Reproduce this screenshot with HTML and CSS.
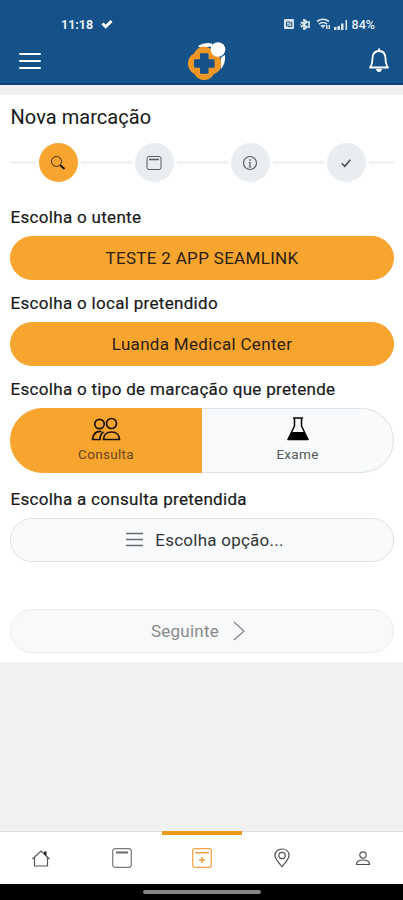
FILE: index.html
```html
<!DOCTYPE html>
<html lang="pt">
<head>
<meta charset="UTF-8">
<meta name="viewport" content="width=device-width, initial-scale=1.0">
<title>Nova marcação</title>
<link rel="stylesheet" href="styles.css">
</head>
<body>
<header class="header">
  <div class="status-bar">
    <span class="clock">11:18</span>
    <svg class="status-check" width="12" height="10" viewBox="0 0 12 10"><path d="M1.500 4.500l3.200 3.200L10.500 2" fill="none" stroke="#fff" stroke-width="3"/></svg>
    <div class="status-right">
      <svg width="10" height="10" viewBox="0 0 10 10"><rect width="10" height="10" rx="1" fill="#dce6f0"/><path d="M2.500 7.500V3h3.500v2.500M4 5v2.500h3.800V2.500" fill="none" stroke="#145289"/></svg>
      <svg width="12" height="11" viewBox="0 0 12 11"><path d="M2 3l6 5-3 2.500V.5l3 2.500-6 5M10 2v7M.8 5.500h1" fill="none" stroke="#dce6f0" stroke-width="1.700"/></svg>
      <svg class="wifi" width="15" height="12" viewBox="0 0 15 12"><path d="M1 3.500q6-4.500 12 0M3 6q4-3 8 0M5 8.200q2-1.400 4 0" fill="none" stroke="#dce6f0" stroke-width="1.700"/><path d="M5.500 8.500h3L7 10.500zM10 7h1.500v4H10zM12.500 7H14v4h-1.500z" fill="#dce6f0"/></svg>
      <svg class="signal" width="15" height="11" viewBox="0 0 15 11"><path d="M1 8h2.500v3H1zM4.500 7H7v4H4.500zM8 4.500h2.500V11H8zM12.500 1h1.600v10h-1.600z" fill="#dce6f0"/></svg>
      <span class="battery">84%</span>
    </div>
  </div>
  <div class="toolbar">
    <svg class="menu" width="22" height="18" viewBox="0 0 22 18"><path d="M1 2h20M1 9h20M1 16h20" stroke="#fff" stroke-width="2" stroke-linecap="round"/></svg>
    <svg class="logo" width="40" height="40" viewBox="0 0 40 40">
      <path d="M11 5Q17 1 25 2.500v3l-12 1zM38 14q.8 8-4 14l-1.500-4 2-8z" fill="#fff"/>
      <path d="M11 7.500C15 5 20 5 24 8c1 1.500 2 2.500 3.500 3.500 2 1 4 2 5.500 5 1.500 3.500 1.500 9 0 12-1.500 2-4 3.500-6 4.500-2 3-5 6-9.500 6s-8-2-10-6C3.500 31 1 27 1 22.500S3.500 14 7 12.500c1-2 2-3.500 4-5z" fill="#ee9725"/>
      <path d="M13.800 13h7v6h6v7h-6v6h-7v-6h-6v-7h6z" fill="#145289" stroke="#145289" stroke-width="1.500" stroke-linejoin="round"/>
      <circle cx="31" cy="8.500" r="7.300" fill="#fff"/>
    </svg>
    <svg class="bell" width="22" height="26" viewBox="0 0 22 26"><path d="M2 20.500h18c-2-2.500-2.300-4-2.500-9C17.300 6.500 15 4 11 4S4.700 6.500 4.500 11.500c-.2 5-.5 6.500-2.500 9z" fill="none" stroke="#fff" stroke-width="1.800" stroke-linejoin="round"/><path d="M11 1.500V4" stroke="#fff" stroke-width="2"/><path d="M8 22h6c-.4 2-1.500 3-3 3s-2.600-1-3-3z" fill="#fff"/></svg>
  </div>
</header>

<main class="card">
  <h1 class="title">Nova marcação</h1>

  <!-- Steps -->
  <div class="steps">
    <div class="step active"><span class="dot">
      <svg width="16" height="16" viewBox="0 0 16 16"><circle cx="6.500" cy="6.500" r="5" fill="none" stroke="#3a2c15" stroke-width="1"/><path d="M10 10l4.500 4" stroke="#201507" stroke-width="2"/></svg>
    </span></div>
    <div class="step"><span class="dot">
      <svg width="16" height="16" viewBox="0 0 16 16"><rect x="1" y="1.500" width="14" height="13" rx="2" fill="none" stroke="#555c62"/><path d="M3 4.500h10" stroke="#555c62" stroke-width="1.500"/></svg>
    </span></div>
    <div class="step"><span class="dot">
      <svg width="16" height="16" viewBox="0 0 16 16"><circle cx="8" cy="8" r="6.500" fill="none" stroke="#555c62" stroke-width="1.200"/><path d="M8 4v2M6.800 7.500H8V12M6.800 12h2.400" fill="none" stroke="#555c62" stroke-width="1.200"/></svg>
    </span></div>
    <div class="step"><span class="dot">
      <svg width="16" height="16" viewBox="0 0 16 16"><path d="M3.800 8.300l3 3 5.500-6.500" fill="none" stroke="#454b50" stroke-width="1.500"/></svg>
    </span></div>
  </div>

  <p class="label">Escolha o utente</p>
  <button class="btn orange">TESTE 2 APP SEAMLINK</button>

  <p class="label">Escolha o local pretendido</p>
  <button class="btn orange">Luanda Medical Center</button>

  <p class="label">Escolha o tipo de marcação que pretende</p>
  <div class="toggle">
    <button class="option selected">
      <svg width="30" height="24" viewBox="0 0 30 24"><g fill="none" stroke="#1c1408" stroke-width="1.700"><circle cx="8.500" cy="7" r="4.700"/><circle cx="20.500" cy="6.500" r="5"/><path d="M12.500 22.500c0-4.500 3-7.500 8-7.500s8 3 8 7.500zM10.500 14.500C5 14 2 17 1.500 22.500H9c0-3.500 1-6 3.500-7.500"/></g></svg>
      <span>Consulta</span>
    </button>
    <button class="option">
      <svg width="24" height="24" viewBox="0 0 24 24"><path d="M8.500 1v8L2 22.500h20L15.500 9V1M7 1h10" fill="none" stroke="#000" stroke-width="1.500" stroke-linejoin="round"/><path d="M6 15h12l4.500 8h-21z"/></svg>
      <span>Exame</span>
    </button>
  </div>

  <p class="label">Escolha a consulta pretendida</p>
  <button class="btn light">
    <svg width="17" height="15" viewBox="0 0 17 15"><path d="M0 1.500h17M0 7.500h17M0 13.500h17" stroke="#686b6e" stroke-width="1.300"/></svg>
    <span>Escolha opção...</span>
  </button>

  <button class="btn light disabled" disabled>
    <span>Seguinte</span>
    <svg width="12" height="20" viewBox="0 0 12 20"><path d="M1 1l10 9-10 9" fill="none" stroke="#85878a" stroke-width="1.300"/></svg>
  </button>
</main>

<nav class="tabs">
  <a class="tab"><svg width="20" height="20" viewBox="0 0 20 20"><path d="M1.500 11L10 3l8.500 8M3.500 9.500V18h13V9.500" fill="none" stroke="#55585a" stroke-width="1.200"/><path d="M13 3.500h2.500V8L13 6z" fill="#222"/></svg></a>
  <a class="tab"><svg width="20" height="20" viewBox="0 0 20 20"><rect x=".7" y=".7" width="18.600" height="18.600" rx="2.500" fill="none" stroke="#77797b" stroke-width="1.200"/><path d="M4 4.500h12" stroke="#66686a" stroke-width="2"/></svg></a>
  <a class="tab current"><svg width="20" height="20" viewBox="0 0 20 20"><rect x=".7" y=".7" width="18.600" height="18.600" rx="2" fill="none" stroke="#f4a144" stroke-width="1.200"/><path d="M3 4.700h14M10 9v6M7 12h6" stroke="#f4a144" stroke-width="1.600"/></svg></a>
  <a class="tab"><svg width="18" height="20" viewBox="0 0 18 20"><path d="M9 18.500C5 14 2 11 2 7.500 2 3.500 5 1 9 1s7 2.500 7 6.500c0 3.500-3 6.500-7 11z" fill="none" stroke="#4d5052" stroke-width="1.200"/><circle cx="9" cy="7.500" r="3.200" fill="none" stroke="#4d5052" stroke-width="1.200"/></svg></a>
  <a class="tab"><svg width="16" height="18" viewBox="0 0 16 18"><circle cx="8" cy="6" r="3.200" fill="none" stroke="#4d5052" stroke-width="1.200"/><path d="M1.500 15.500c0-3 2-4.500 6.500-4.500s6.500 1.500 6.500 4.500z" fill="none" stroke="#4d5052" stroke-width="1.200"/></svg></a>
</nav>
<div class="gesture-bar"><span class="handle"></span></div>
</body>
</html>
```

FILE: styles.css
```css
* {
    box-sizing: border-box;
}

body {
    margin: 0;
    height: 900px;
    display: flex;
    flex-direction: column;
    background-color: #f1f1f1;
    color: #191919;
    font-family: Roboto, "Liberation Sans", sans-serif;
}

svg {
    display: block;
    flex: none;
}

.header {
    height: 85px;
    background-color: #145289;
    border-bottom: 2px solid #0b3b7d;
}

/* Phone status bar */
.status-bar {
    display: flex;
    align-items: center;
    height: 40px;
    padding: 8px 28px 0 61px;
    color: #e9f0f7;
    font-size: 12px;
    font-weight: 700;
}

.clock {
    width: 33px;
    font-size: 12.5px;
}

.status-check {
    margin-left: 7px;
}

.status-right {
    display: flex;
    align-items: center;
    margin-left: auto;
}

.status-right svg {
    margin-right: 5px;
}

.status-right .wifi {
    margin-right: 2px;
}

.status-right .signal {
    margin-right: 4px;
}

.battery {
    font-weight: 500;
    font-size: 12.5px;
}

.toolbar {
    display: flex;
    align-items: center;
    justify-content: space-between;
    height: 42px;
    padding: 0 13px 0 19px;
}

.logo {
    margin-left: 4px;
}

.bell {
    margin-bottom: 2px;
}

/* Form card */
.card {
    display: flex;
    flex-direction: column;
    height: 567px;
    margin-top: 10px;
    padding: 8px 9px 0 10px;
    background-color: #fff;
}

.title {
    margin: 0;
    padding-left: 0.5px;
    font-size: 20px;
    font-weight: 400;
    line-height: 28px;
    letter-spacing: 0.05px;
}

.steps {
    display: flex;
    margin: 12px 0 24px;
}

.step {
    display: flex;
    flex: 1;
    align-items: center;
    gap: 3px;
}

.step::before,
.step::after {
    content: "";
    flex: 1;
    height: 3px;
    background-color: #f1f2f3;
}

.dot {
    display: flex;
    align-items: center;
    justify-content: center;
    width: 39px;
    height: 39px;
    border-radius: 50%;
    background-color: #e9edf0;
}

.active .dot {
    background-color: #f8a530;
}

.label {
    margin: 0 0 8px;
    padding-left: 0.5px;
    font-size: 17px;
    line-height: 22px;
    letter-spacing: 0.31px;
    -webkit-text-stroke: 0.2px #191919;
}

.btn {
    display: flex;
    align-items: center;
    justify-content: center;
    gap: 12px;
    height: 44px;
    margin: 0 0 12px;
    padding: 0 0 1px;
    border: 1px solid #f8a530;
    border-radius: 22px;
    font-family: inherit;
    font-size: 17px;
    letter-spacing: 0.32px;
    color: #2b2012;
}

.orange {
    background-color: #f8a530;
}

.light {
    margin-bottom: 47px;
    padding-left: 6px;
    background-color: #f8fafb;
    border-color: #e0e3e6;
    color: #333537;
    letter-spacing: 0.25px;
}

.disabled {
    margin-bottom: 0;
    padding-left: 0;
    padding-right: 8px;
    gap: 14px;
    background-color: #f8f9fa;
    border-color: #ececee;
    color: #88898b;
}

.toggle {
    display: flex;
    height: 65px;
    margin-bottom: 15px;
}

.option {
    display: flex;
    flex: 1;
    flex-direction: column;
    align-items: center;
    gap: 4px;
    padding: 8px 0 0;
    border: 1px solid #dfe2e4;
    border-left: 0;
    border-radius: 0 33px 33px 0;
    background-color: #f8fafb;
    font-family: inherit;
    font-size: 13.5px;
    letter-spacing: 0.3px;
    line-height: 18px;
    color: #55585a;
}

.selected {
    flex: none;
    width: 192px;
    border: 1px solid #f8a530;
    border-radius: 33px 0 0 33px;
    background-color: #f8a530;
    color: #664720;
}

/* Bottom navigation */
.tabs {
    display: flex;
    height: 53px;
    margin-top: auto;
    padding-left: 1px;
    border-top: 1px solid #dcdcdc;
    background-color: #fff;
}

.tab {
    display: flex;
    flex: 1;
    align-items: center;
    justify-content: center;
}

.current {
    margin-top: -1px;
    border-top: 4px solid #eb9b1c;
    padding-bottom: 3px;
}

.gesture-bar {
    display: flex;
    justify-content: center;
    height: 16px;
    padding-top: 6px;
    background-color: #000;
}

.handle {
    width: 118px;
    height: 4px;
    border-radius: 2px;
    background-color: #858585;
}
```
